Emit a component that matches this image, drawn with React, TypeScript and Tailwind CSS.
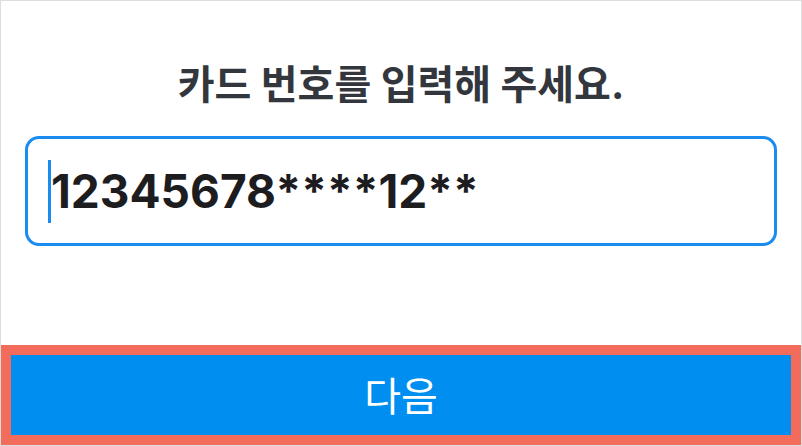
export default function App() {
	return (
		<div className="flex h-[446px] w-[802px] flex-col border border-[#dedede] bg-white font-['Inter','Noto_Sans_CJK_KR',sans-serif]">
			<h1 className="mt-[58px] text-center text-[40px] font-bold leading-[52px] text-[#33373d]">
				카드 번호를 입력해 주세요.
			</h1>

			<div className="mx-[24px] mt-[25px] flex h-[110px] items-center rounded-[14px] border-[3px] border-[#1a8cf0] pl-[20px]">
				<span className="h-[63px] w-[3px] bg-[#1a8cf0]" />
				<span className="text-[46px] font-bold leading-none text-[#1d1d1f]">12345678****12**</span>
			</div>

			<div className="mt-auto border-[10px] border-[#f26b5b]">
				<button className="flex h-[80px] w-full items-center justify-center bg-[#008ff0] pt-[4px] text-[40px] font-normal text-white">
					다음
				</button>
			</div>
		</div>
	);
}
